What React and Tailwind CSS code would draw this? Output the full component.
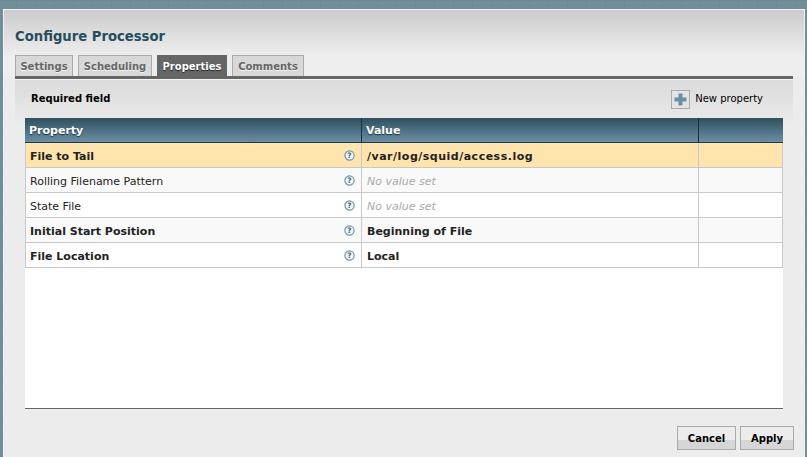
function Help() {
  return (
    <svg width="11" height="11" viewBox="0 0 11 11" className="shrink-0">
      <circle cx="5.5" cy="5.5" r="4.6" fill="#f4f7f8" stroke="#6f97ab" strokeWidth="1.2" />
      <text x="5.5" y="8.2" textAnchor="middle" fontSize="7.5" fontWeight="700" fontFamily="'DejaVu Sans', sans-serif" fill="#44606e">?</text>
    </svg>
  );
}
const rows = [
  { name: "File to Tail", value: "/var/log/squid/access.log", bold: true, sel: true, wide: true },
  { name: "Rolling Filename Pattern", value: "No value set", alt: true, empty: true },
  { name: "State File", value: "No value set", empty: true },
  { name: "Initial Start Position", value: "Beginning of File", bold: true, alt: true },
  { name: "File Location", value: "Local", bold: true },
];
function Tab({ label, active, w }) {
  return (
    <div className={`${w} h-[21px] pt-[1px] flex items-center justify-center text-[10px] font-bold ${active ? "bg-[#666666] text-white [text-shadow:0_1px_1px_#222]" : "bg-[#d8d8d8] border border-b-0 border-[#aaaaaa] text-[#666666] [text-shadow:0_1px_0_#f4f4f4]"}`}>
      {label}
    </div>
  );
}
export default function App() {
  return (
    <div className="w-[807px] h-[457px] overflow-hidden bg-[#728e9b] bg-[linear-gradient(#6d8995_1px,transparent_1px),linear-gradient(90deg,#6d8995_1px,transparent_1px)] bg-[size:19px_19px] bg-[position:-3px_0px] pt-[9px] pl-[3px] font-['DejaVu_Sans','Liberation_Sans',sans-serif]">
      <div className="w-[802px] h-[448px] border-t border-l border-r border-[#f3f3f3] bg-[#ececec] flex flex-col">
        <div className="h-[66px] shrink-0 bg-[linear-gradient(#cccccc,#eeeeee_70%)] flex flex-col justify-between pl-[11px] pr-[11px]">
          <div className="pt-[18px] text-[13.2px] leading-[18px] font-bold text-[#264d5e]">Configure Processor</div>
          <div className="flex gap-[5px]">
            <Tab label="Settings" w="w-[58px]" />
            <Tab label="Scheduling" w="w-[74px]" />
            <Tab label="Properties" w="w-[70px]" active />
            <Tab label="Comments" w="w-[72px]" />
          </div>
        </div>
        <div className="mx-[11px] h-[3px] shrink-0 bg-[#666666]" />
        <div className="mx-[11px] flex-1 border-t border-[#f4f4f4] flex flex-col px-[10px] bg-[linear-gradient(#dbdbdb,#ececec_48px)]">
          <div className="h-[38px] shrink-0 flex items-center justify-between">
            <span className="pl-[6px] pb-[2px] text-[10px] font-bold text-black">Required field</span>
            <div className="flex items-center gap-[5px] pr-[20px]">
              <div className="w-[19px] h-[19px] border border-[#aaaaaa] bg-[#e4e4e4] flex items-center justify-center">
                <svg width="13" height="13" viewBox="0 0 13 13"><path d="M4.5 0.5h4v4h4v4h-4v4h-4v-4h-4v-4h4z" fill="#6a8fa5" /></svg>
              </div>
              <span className="pb-[2px] text-[10px] text-black">New property</span>
            </div>
          </div>
          <div className="w-[758px] h-[291px] shrink-0 bg-white border-b border-[#666666] flex flex-col">
            <div className="h-[25px] shrink-0 flex bg-[linear-gradient(#30505f,#6a8ea5)] border-b border-[#1f3b48] text-white text-[11px] font-bold [text-shadow:0_1px_1px_#1d3440]">
              <div className="w-[337px] flex items-center pl-[4px] pt-[2px] border-r border-[#16303c]">Property</div>
              <div className="w-[337px] flex items-center pl-[4px] pt-[2px] border-r border-[#16303c]">Value</div>
            </div>
            {rows.map((r) => (
              <div key={r.name} className={`h-[25px] shrink-0 flex border-b border-r border-l border-[#c8c8c8] text-[11px] ${r.sel ? "bg-[#ffe4ad]" : r.alt ? "bg-[#f9f9f9]" : "bg-white"}`}>
                <div className={`w-[336px] flex items-center justify-between pl-[4px] pr-[6px] pt-[1px] border-r border-[#c8c8c8] text-[#222222] ${r.bold ? "font-bold" : ""}`}>
                  <span className="pt-[3px]">{r.name}</span>
                  <Help />
                </div>
                <div className={`w-[337px] flex items-center pl-[5px] pt-[4px] border-r border-[#c8c8c8] ${r.empty ? "italic text-[#aaaaaa]" : "font-bold text-[#222222]"} ${r.wide ? "tracking-[0.5px]" : ""}`}>
                  {r.value}
                </div>
              </div>
            ))}
          </div>
          <div className="flex-1 flex justify-end items-start gap-[4px] pt-[17px] mr-[-11px]">
            <button className="w-[59px] h-[24px] border border-[#aaaaaa] bg-[linear-gradient(#ececec_60%,#d6d6d6_60%)] text-[10px] font-bold text-black">Cancel</button>
            <button className="w-[54px] h-[24px] border border-[#aaaaaa] bg-[linear-gradient(#ececec_60%,#d6d6d6_60%)] text-[10px] font-bold text-black">Apply</button>
          </div>
        </div>
      </div>
    </div>
  );
}
